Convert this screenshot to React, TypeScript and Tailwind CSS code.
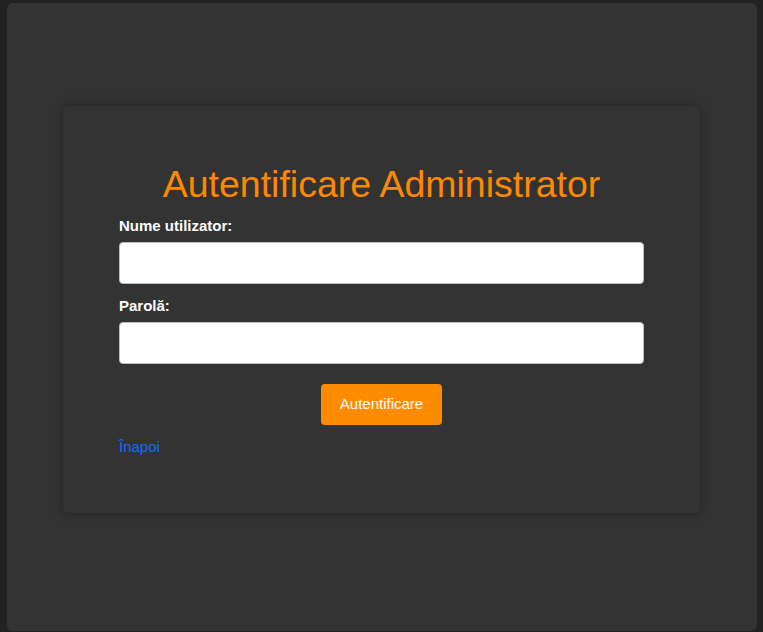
export default function App() {
  return (
    <div className="min-h-screen bg-[#222222] pt-[3px] font-['Liberation_Sans',Arial,sans-serif]">
      <div className="mx-[7px] h-[628px] w-[750px] rounded-md bg-[#333333] pt-[103px]">
        <form
          className="mx-[56px] flex h-[407px] w-[637px] flex-col rounded-md bg-[#333333] px-[56px] pt-[57px] shadow-[0_0_12px_rgba(0,0,0,0.35)]"
          onSubmit={(e) => e.preventDefault()}
        >
          <h1 className="mb-[12px] text-center text-[37.5px] leading-[43px] text-[#ff8800]">
            Autentificare Administrator
          </h1>
          <label className="flex flex-col">
            <span className="mb-[8px] text-[15px] font-bold leading-4 text-white">
              Nume utilizator:
            </span>
            <input
              type="text"
              className="h-[42px] w-[525px] rounded border border-[#bdbdbd] bg-white px-3 text-[15px] text-black outline-none"
            />
          </label>
          <label className="mt-[14px] flex flex-col">
            <span className="mb-[8px] text-[15px] font-bold leading-4 text-white">
              Parolă:
            </span>
            <input
              type="password"
              className="h-[42px] w-[525px] rounded border border-[#bdbdbd] bg-white px-3 text-[15px] text-black outline-none"
            />
          </label>
          <div className="mt-[20px] flex justify-center">
            <button
              type="submit"
              className="h-[41px] w-[121px] rounded bg-[#ff8c00] text-[15px] text-white"
            >
              Autentificare
            </button>
          </div>
          <a
            href="#"
            className="mt-[14px] self-start text-[15px] leading-4 text-[#0d6efd]"
          >
            Înapoi
          </a>
        </form>
      </div>
    </div>
  );
}
